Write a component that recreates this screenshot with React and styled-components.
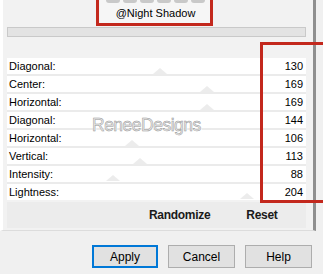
import styled, { createGlobalStyle } from "styled-components";

const GlobalStyle = createGlobalStyle`
	html, body {
		margin: 0;
		padding: 0;
		background: #f0f0f0;
	}

	body {
		font-family: "Liberation Sans", Arial, sans-serif;
		font-size: 11px;
		color: #000000;
	}
`;

const Window = styled.div`
	position: relative;
	width: 323px;
	height: 274px;
	overflow: hidden;
	background: #f0f0f0;
`;

const Panel = styled.div`
	box-sizing: border-box;
	width: 316px;
	height: 231px;
	padding: 0 7px 0 4px;

	display: flex;
	flex-direction: column;
	align-items: stretch;

	background: #f2f2f2;
	border-left: 3px solid #ffffff;
	border-right: 3px solid #8f8f8f;
	border-bottom: 1px solid #dcdcdc;
`;

const PresetBox = styled.div`
	align-self: flex-start;
	margin-left: 93px;
	box-sizing: border-box;
	width: 111px;
	height: 24px;

	display: flex;
	flex-direction: column;
	align-items: center;

	background: #f6f6f6;
`;

const TileStrip = styled.div`
	display: flex;
	gap: 3px;
`;

const Tile = styled.div`
	width: 14px;
	height: 3px;
	border-radius: 0 0 3px 3px;
	background: #c9c9c9;
`;

const PresetName = styled.div`
	margin-top: 4px;
	font-size: 11px;
	line-height: 13px;
`;

const ProgressBar = styled.div`
	box-sizing: border-box;
	margin-top: 3px;
	height: 10px;
	background: #e3e3e3;
	border: 1px solid #c9c9c9;
`;

const ValueList = styled.div`
	margin-top: 21px;
	display: grid;
	grid-auto-rows: 16px;
	row-gap: 2px;
	background: #ebebeb;
`;

const ValueRow = styled.div`
	display: flex;
	justify-content: space-between;
	align-items: center;
	padding: 0 3px 0 2px;
	background: #ffffff;
	line-height: 16px;
`;

const ActionBar = styled.div`
	margin-top: 2px;
	height: 26px;
	padding-left: 142px;

	display: flex;
	align-items: center;
	gap: 36px;

	background: #ececec;
`;

const ActionText = styled.div`
	font-size: 12px;
	font-weight: 700;
	color: #1a1a1a;
	letter-spacing: -0.3px;
`;

const ButtonRow = styled.div`
	display: flex;
	justify-content: flex-end;
	gap: 10px;
	padding: 14px 11px 0 0;
`;

const Button = styled.button`
	box-sizing: border-box;
	width: ${ (props) => props.$width }px;
	height: 23px;
	padding: 0;

	font-family: "Liberation Sans", Arial, sans-serif;
	font-size: 12px;
	color: #000000;

	background: #e1e1e1;
	border: ${ (props) => props.$primary ? "2px solid #0078d7" : "1px solid #adadad" };
`;

const RedFrame = styled.div`
	position: absolute;
	left: ${ (props) => props.$x }px;
	top: ${ (props) => props.$y }px;
	width: ${ (props) => props.$w }px;
	height: ${ (props) => props.$h }px;
	box-sizing: border-box;
	border: 3px solid #c3281d;
	pointer-events: none;
`;

const Watermark = styled.div`
	position: absolute;
	left: 92px;
	top: 115px;
	font-size: 17.5px;
	letter-spacing: -0.5px;
	color: #ececec;
	-webkit-text-stroke: 0.5px #959595;
	text-shadow: 1px 1px 0 #ffffff;
`;

const Triangle = styled.div`
	position: absolute;
	left: ${ (props) => props.$x - 7 }px;
	top: ${ (props) => props.$y }px;
	width: 0;
	height: 0;
	border-left: 7px solid transparent;
	border-right: 7px solid transparent;
	border-bottom: 6px solid rgba(200, 200, 200, 0.35);
`;

const values = [
	{ label: "Diagonal:", value: 130 },
	{ label: "Center:", value: 169 },
	{ label: "Horizontal:", value: 169 },
	{ label: "Diagonal:", value: 144 },
	{ label: "Horizontal:", value: 106 },
	{ label: "Vertical:", value: 113 },
	{ label: "Intensity:", value: 88 },
	{ label: "Lightness:", value: 204 },
];

const triangles = [
	[ 160, 68 ],
	[ 207, 86 ],
	[ 207, 104 ],
	[ 132, 140 ],
	[ 140, 158 ],
	[ 113, 175 ],
	[ 247, 193 ],
];

export default function App() {
	return (
		<Window>
			<GlobalStyle/>
			<Panel>
				<PresetBox>
					<TileStrip>
						{ [ 0, 1, 2, 3, 4, 5 ].map((i) => <Tile key={ i }/>) }
					</TileStrip>
					<PresetName>@Night Shadow</PresetName>
				</PresetBox>
				<ProgressBar/>
				<ValueList>
					{
						values.map((item, i) => (
							<ValueRow key={ i }>
								<span>{ item.label }</span>
								<span>{ item.value }</span>
							</ValueRow>))
					}
				</ValueList>
				<ActionBar>
					<ActionText>Randomize</ActionText>
					<ActionText>Reset</ActionText>
				</ActionBar>
			</Panel>
			<ButtonRow>
				<Button $width={ 66 } $primary>Apply</Button>
				<Button $width={ 67 }>Cancel</Button>
				<Button $width={ 67 }>Help</Button>
			</ButtonRow>
			{ triangles.map(([ x, y ], i) => <Triangle key={ i } $x={ x } $y={ y }/>) }
			<Watermark>ReneeDesigns</Watermark>
			<RedFrame $x={ 96 } $y={ -3 } $w={ 117 } $h={ 29 }/>
			<RedFrame $x={ 260 } $y={ 42 } $w={ 70 } $h={ 161 }/>
		</Window>);
}
